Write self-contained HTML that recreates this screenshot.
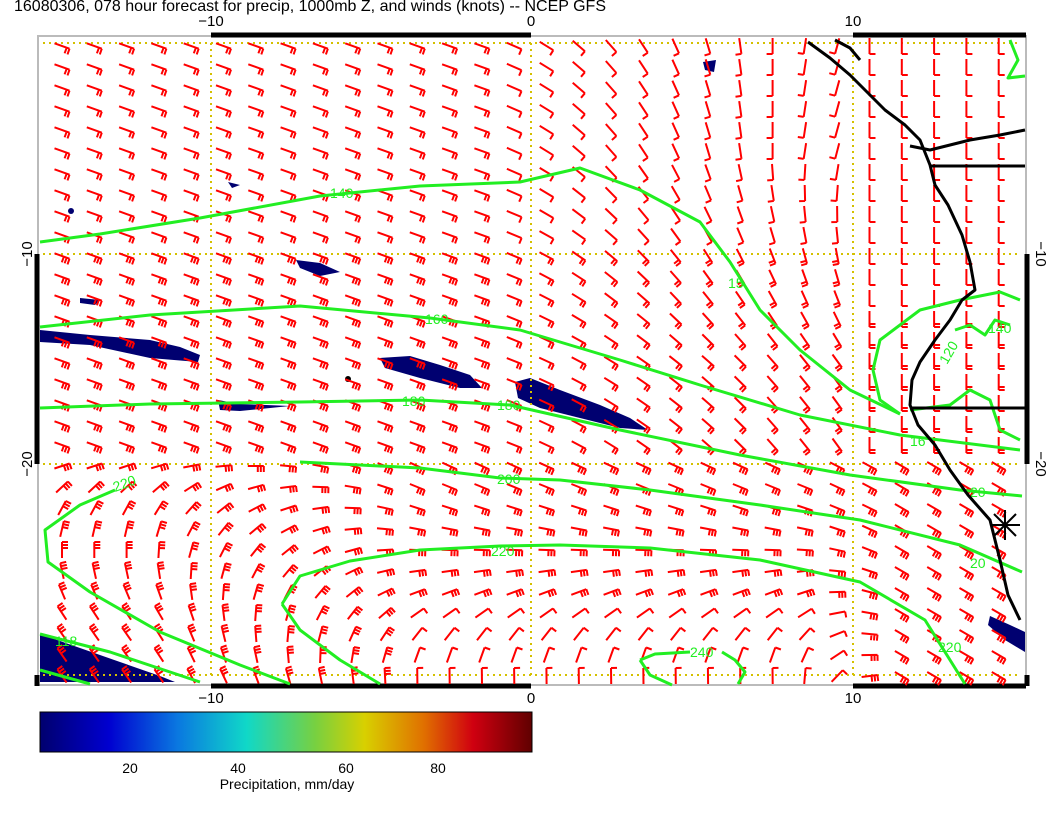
<!DOCTYPE html>
<html><head><meta charset="utf-8">
<style>
html,body{margin:0;padding:0;background:#fff;}
body{width:1056px;height:816px;overflow:hidden;position:relative;font-family:"Liberation Sans",sans-serif;}
svg{position:absolute;left:0;top:0;}
</style></head>
<body>
<svg id="s" width="1056" height="816" viewBox="0 0 1056 816" xmlns="http://www.w3.org/2000/svg">
<defs>
<linearGradient id="cb" x1="0" x2="1" y1="0" y2="0">
<stop offset="0" stop-color="#00006e"/>
<stop offset="0.14" stop-color="#0000d0"/>
<stop offset="0.28" stop-color="#0a78e0"/>
<stop offset="0.42" stop-color="#10d8c8"/>
<stop offset="0.56" stop-color="#78d040"/>
<stop offset="0.66" stop-color="#d8d000"/>
<stop offset="0.78" stop-color="#e07000"/>
<stop offset="0.88" stop-color="#d00010"/>
<stop offset="1" stop-color="#600000"/>
</linearGradient>
</defs>
<text x="14" y="11" font-size="16" fill="#000" font-family="Liberation Sans, sans-serif">16080306, 078 hour forecast for precip, 1000mb Z, and winds (knots) -- NCEP GFS</text>
<rect x="38" y="36" width="988" height="649" fill="none" stroke="#bbb" stroke-width="2"/>
<g stroke="#000" stroke-width="5">
<line x1="211" y1="35" x2="531" y2="35"/><line x1="853" y1="35" x2="1026" y2="35"/>
<line x1="211" y1="686" x2="531" y2="686"/><line x1="853" y1="686" x2="1026" y2="686"/>
<line x1="37" y1="254" x2="37" y2="464"/><line x1="37" y1="675" x2="37" y2="686"/>
<line x1="1027" y1="254" x2="1027" y2="464"/><line x1="1027" y1="675" x2="1027" y2="686"/>
</g>
<g font-size="15" fill="#000" text-anchor="middle">
<text x="211" y="26">−10</text><text x="531" y="26">0</text><text x="853" y="26">10</text>
<text x="211" y="703">−10</text><text x="531" y="703">0</text><text x="853" y="703">10</text>
<text transform="translate(32,254) rotate(-90)">−10</text>
<text transform="translate(32,464) rotate(-90)">−20</text>
<text transform="translate(1036,254) rotate(90)">−10</text>
<text transform="translate(1036,464) rotate(90)">−20</text>
</g>
<g fill="#000070">
<path d="M40,330 L90,335 L150,340 L180,347 L200,355 L198,362 L150,358 L90,345 L40,342 Z"/>
<path d="M380,358 L410,356 L440,365 L470,375 L482,388 L460,388 L420,378 L385,368 Z"/>
<path d="M515,382 L530,378 L560,390 L600,405 L630,418 L648,430 L620,428 L580,418 L540,408 L518,398 Z"/>
<path d="M296,260 L320,263 L340,272 L320,276 L300,268 Z"/>
<path d="M40,634 L80,648 L120,662 L160,676 L175,682 L40,682 Z"/>
<path d="M990,616 L1010,625 L1025,632 L1025,652 L1005,640 L988,625 Z"/>
<path d="M218,400 L240,404 L290,406 L240,411 L220,410 Z"/>
<path d="M80,298 L100,300 L95,305 L80,303 Z"/>
<path d="M228,182 L240,185 L232,188 Z"/>
<path d="M703,62 L716,60 L714,72 L705,70 Z"/>
<circle cx="71" cy="211" r="3"/><circle cx="348" cy="379" r="3" fill="#000"/>
</g>
<g stroke="#d4c000" stroke-width="2" stroke-dasharray="2,4" fill="none">
<line x1="43" y1="43" x2="1020" y2="43"/><line x1="43" y1="254" x2="1020" y2="254"/>
<line x1="43" y1="464" x2="1020" y2="464"/><line x1="43" y1="675" x2="1020" y2="675"/>
<line x1="211" y1="43" x2="211" y2="675"/><line x1="531" y1="43" x2="531" y2="675"/>
<line x1="853" y1="43" x2="853" y2="675"/>
</g>
<g id="barbs" stroke="#ff0000" stroke-width="2" fill="none"></g>
<g stroke="#22ee22" stroke-width="3" fill="none" stroke-linejoin="round">
<path d="M40,242 L100,234 L200,218 L320,196 L420,186 L520,182 L580,168 L640,190 L700,222 L730,262 L760,310 L800,350 L850,390 L900,414"/>
<path d="M40,327 L150,315 L300,306 L430,318 L520,330 L620,360 L700,385 L800,415 L900,435 L1020,450"/>
<path d="M40,408 L150,404 L300,402 L420,400 L510,405 L620,430 L740,455 L850,475 L960,490 L1022,496"/>
<path d="M300,462 L420,468 L500,478 L560,480 L650,490 L760,505 L860,520 L960,545 L1022,572"/>
<path d="M115,490 L80,505 L45,530 L48,562 L90,592 L160,632 L240,665 L290,684"/>
<path d="M282,604 L300,576 L350,561 L420,550 L500,546 L560,545 L650,548 L760,560 L860,582 L925,620 L950,660 L965,684"/>
<path d="M282,604 L300,630 L340,660 L380,684"/>
<path d="M40,634 L110,652 L200,682"/>
<path d="M40,670 L90,684"/>
<path d="M640,660 L655,654 L690,652 M722,652 L735,660 L745,672 L738,684 M640,660 L650,675 L672,685"/>
<path d="M900,414 L880,400 L873,370 L880,340 L920,310 L960,300 L1000,292 L1020,300"/>
<path d="M910,410 L950,405 L970,390 L990,400 L1000,430 L1020,440"/>
<path d="M1010,40 L1018,60 L1008,78 L1025,76"/>
<path d="M955,330 L970,325 L985,335 L995,320 L1010,325"/>
</g>
<g font-size="14" fill="#22ee22">
<text x="330" y="198">140</text><text x="425" y="324">160</text><text x="402" y="406">180</text>
<text x="497" y="410">180</text><text x="497" y="484">200</text><text x="115" y="492" transform="rotate(-20 115 492)">220</text>
<text x="491" y="556">220</text><text x="690" y="657">240</text><text x="728" y="288">15</text>
<text x="910" y="446">16</text><text x="970" y="497">20</text><text x="970" y="568">20</text>
<text x="938" y="652">220</text><text x="55" y="646">118</text><text x="988" y="333">140</text>
<text x="947" y="365" transform="rotate(-60 947 365)">120</text>
</g>
<g stroke="#000" stroke-width="3" fill="none" stroke-linejoin="round">
<path d="M808,42 L830,58 L850,75 L870,95 L885,110 L905,125 L920,140 L930,165 L935,185 L948,205 L962,235 L970,262 L975,290 L962,300 L950,320 L935,340 L920,362 L912,380 L910,405 L918,425 L935,445 L950,470 L968,495 L990,520 L1000,560 L1008,595 L1020,620"/>
<path d="M930,166 L1025,166"/><path d="M910,408 L1025,408"/>
<path d="M910,146 L930,150 L970,140 L1000,135 L1025,130"/>
<path d="M835,40 L850,48 L860,60"/>
</g>
<g stroke="#000" stroke-width="2"><line x1="990" y1="525" x2="1020" y2="525"/><line x1="1005" y1="510" x2="1005" y2="540"/><line x1="994" y1="514" x2="1016" y2="536"/><line x1="1016" y1="514" x2="994" y2="536"/></g>
<rect x="40" y="712" width="492" height="40" fill="url(#cb)" stroke="#000" stroke-width="1"/>
<g font-size="14" fill="#000" text-anchor="middle">
<text x="130" y="773">20</text><text x="238" y="773">40</text><text x="346" y="773">60</text><text x="438" y="773">80</text>
<text x="287" y="789">Precipitation, mm/day</text>
</g>
</svg>
<script>
(function(){
var g=document.getElementById('barbs'),out='';
function clamp(v,a,b){return Math.max(a,Math.min(b,v));}
for(var j=0;j<31;j++){for(var i=0;i<30;i++){
 var x=62+32.3*i,y=46+21*j,ang,flip=false,n=3;
 if(y<450){
  ang=20;
  if(x>500){var f=1-clamp((y-150)/350,0,0.6); ang=20+clamp((x-500)/330,0,1)*85*f;}
  if(x>860){ang=90;flip=true;}
  if(x<500){n=(y<250)?2:3;} else if(x<860){n=(y<250)?1:2;} else n=(y<300)?1:2;
 } else {
  var t=(y-450)/225;
  var a1=clamp(30-180*Math.sqrt(t),-125,30), a2=25-115*t*t;
  var w=clamp((x-150)/250,0,1); ang=a1*(1-w)+a2*w;
  var w2=clamp((x-800)/100,0,1); ang=ang*(1-w2)+30*w2;
  n=(y>600&&x>400&&x<850)?1:3;
 }
 var r=ang*Math.PI/180,dx=Math.cos(r),dy=Math.sin(r),px=-dy,py=dx;
 if(flip){px=-px;py=-py;}
 var x0=x-8*dx,y0=y-8*dy,x1=x+8*dx,y1=y+8*dy;
 out+='<path d="M'+x0.toFixed(1)+','+y0.toFixed(1)+'L'+x1.toFixed(1)+','+y1.toFixed(1);
 for(var k=0;k<n;k++){var bx=x1-3*k*dx,by=y1-3*k*dy;
  out+='M'+bx.toFixed(1)+','+by.toFixed(1)+'L'+(bx+6*px).toFixed(1)+','+(by+6*py).toFixed(1);}
 out+='"/>';
}}
g.innerHTML=out;
})();
</script>
</body></html>
